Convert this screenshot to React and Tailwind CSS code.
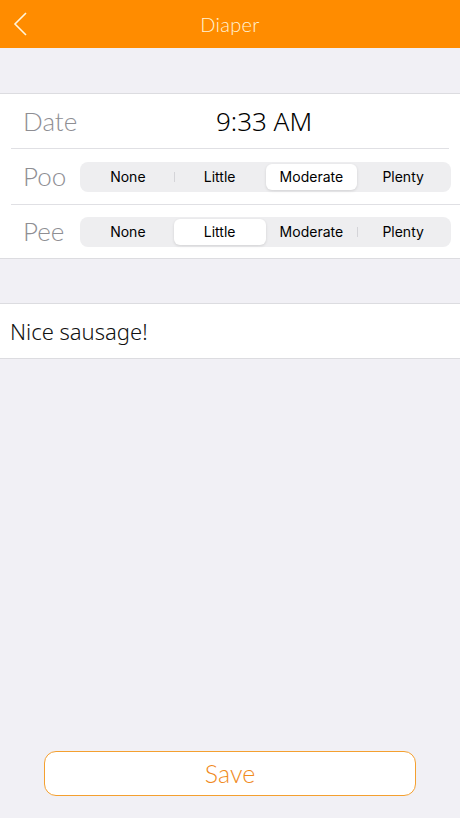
import React, { useState } from 'react';

const OPTIONS = ['None', 'Little', 'Moderate', 'Plenty'];

const Segmented = ({ value, onChange }) => {
  const idx = OPTIONS.indexOf(value);
  return (
    <div className="flex-1 h-[30px] rounded-[8px] bg-[#eeeef0] p-[2px] flex items-stretch">
      {OPTIONS.map((opt, i) => {
        const selected = i === idx;
        // divider shows only between two unselected segments
        const showDivider = i > 0 && i !== idx && i - 1 !== idx;
        return (
          <div key={opt} className="relative flex-1 flex">
            {showDivider && (
              <span className="absolute left-0 top-[8px] bottom-[8px] w-px bg-[#d4d4d8]" />
            )}
            <button
              onClick={() => onChange(opt)}
              className={
                'flex-1 rounded-[6px] text-[14px] text-black font-normal ' +
                (selected ? 'bg-white shadow-[0_1px_3px_rgba(0,0,0,0.12)]' : '')
              }
              style={{ fontFamily: 'Inter, "Noto Sans", sans-serif' }}
            >
              {opt}
            </button>
          </div>
        );
      })}
    </div>
  );
};

const App = () => {
  const [poo, setPoo] = useState('Moderate');
  const [pee, setPee] = useState('Little');

  return (
    <div
      className="min-h-[818px] bg-[#f1f0f5] flex flex-col"
      style={{ fontFamily: 'Lato, "Noto Sans", sans-serif' }}
    >
      <header className="relative h-[48px] bg-[#ff8c00] flex items-center justify-center">
        <button className="absolute left-[12px] top-[11px] w-[18px] h-[26px]">
          <svg viewBox="0 0 18 26" className="w-[18px] h-[26px]" fill="none" stroke="#fff6dc" strokeWidth="1.6">
            <path d="M14 2 L3 13 L14 24" />
          </svg>
        </button>
        <h1 className="text-[20px] font-light text-[#fff3d6] tracking-[0.3px]">Diaper</h1>
      </header>

      <div className="h-[45px]" />

      <section className="bg-white border-t border-b border-[#dcdce0]">
        <div className="mx-[11px] h-[55px] flex items-center border-b border-[#e0e0e4]">
          <span className="w-[68px] pl-[12px] text-[26px] font-light text-[#8e8e93]">Date</span>
          <span className="flex-1 text-center text-[26px] text-black" style={{ fontFamily: '"Noto Sans", sans-serif', fontWeight: 300 }}>9:33 AM</span>
        </div>
        <div className="ml-[11px] h-[56px] flex items-center">
          <div className="flex-1 h-full flex items-center border-b border-[#e0e0e4] pr-[9px]">
            <span className="w-[69px] pl-[12px] text-[26px] font-light text-[#8e8e93]">Poo</span>
            <Segmented value={poo} onChange={setPoo} />
          </div>
        </div>
        <div className="ml-[11px] pr-[9px] h-[53px] flex items-center">
          <span className="w-[69px] pl-[12px] text-[26px] font-light text-[#8e8e93]">Pee</span>
          <Segmented value={pee} onChange={setPee} />
        </div>
      </section>

      <div className="h-[44px]" />

      <section className="bg-white border-t border-b border-[#dcdce0] h-[56px] flex items-center px-[10px]">
        <span className="text-[22px] text-[#111]" style={{ fontFamily: '"Noto Sans", sans-serif', fontWeight: 300 }}>Nice sausage!</span>
      </section>

      <div className="flex-1" />

      <div className="px-[44px] pb-[22px]">
        <button className="w-full h-[45px] rounded-[12px] border border-[#f4a030] bg-white text-[25px] font-light text-[#f08a1c]">
          Save
        </button>
      </div>
    </div>
  );
};

export default App;
